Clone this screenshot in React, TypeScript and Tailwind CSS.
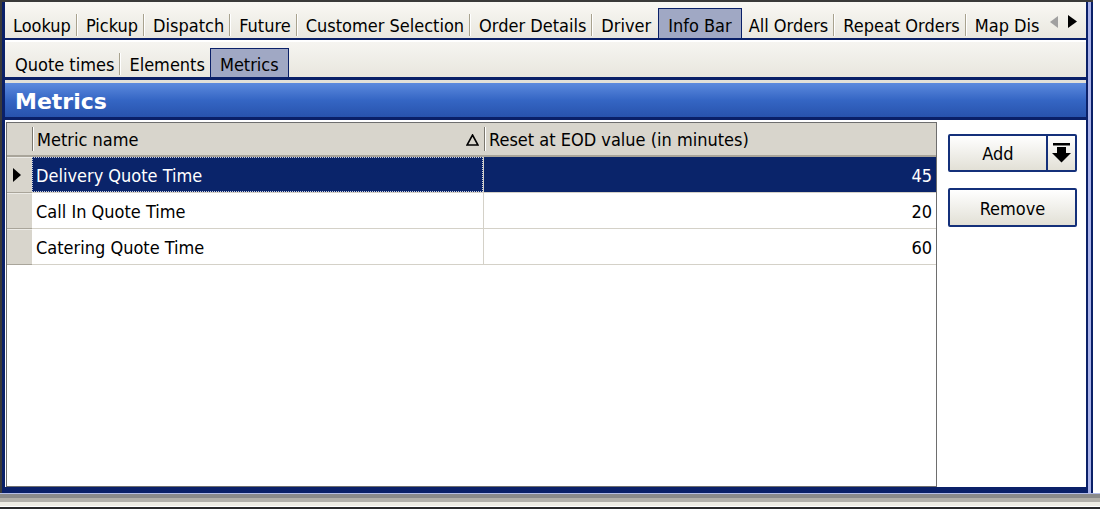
import React from "react";

const topTabs = [
  "Lookup",
  "Pickup",
  "Dispatch",
  "Future",
  "Customer Selection",
  "Order Details",
  "Driver",
  "Info Bar",
  "All Orders",
  "Repeat Orders",
  "Map Dis",
];

const subTabs = ["Quote times", "Elements", "Metrics"];

const rows = [
  { name: "Delivery Quote Time", value: 45 },
  { name: "Call In Quote Time", value: 20 },
  { name: "Catering Quote Time", value: 60 },
];

const Separator = () => (
  <span className="mb-[2px] flex h-[22px] w-[2px] shrink-0">
    <span className="w-px bg-[#a8a28e]" />
    <span className="w-px bg-white" />
  </span>
);

const TabStrip = ({
  tabs,
  active,
  activeTop,
  firstPad,
}: {
  tabs: string[];
  active: string;
  activeTop: string;
  firstPad: string;
}) => {
  const activeIndex = tabs.indexOf(active);
  return (
    <div className="flex min-w-0 flex-1 items-end overflow-hidden whitespace-nowrap">
      {tabs.map((tab, i) => {
        if (tab === active) {
          return (
            <div
              key={tab}
              className={`flex shrink-0 items-center border border-b-0 border-[#0a2068] bg-[#a0a8c4] px-[9px] pt-[3px] ${activeTop}`}
            >
              {tab}
            </div>
          );
        }
        const showSep = i !== activeIndex - 1 && i !== tabs.length - 1;
        const pad = i === 0 ? firstPad : i === activeIndex + 1 ? "pl-[7px]" : "pl-[8px]";
        return (
          <React.Fragment key={tab}>
            <span className={`shrink-0 pb-px leading-[22px] ${pad} pr-[5px]`}>
              {tab}
            </span>
            {showSep && <Separator />}
          </React.Fragment>
        );
      })}
    </div>
  );
};

const DropArrow = () => (
  <svg width="19" height="20" viewBox="0 0 19 20">
    <rect x="1" y="0" width="17" height="2.5" fill="#000" />
    <rect x="5" y="4" width="9" height="7" fill="#000" />
    <polygon points="0,10 19,10 9.5,19.5" fill="#000" />
  </svg>
);

const SortTriangle = () => (
  <svg width="13" height="12" viewBox="0 0 13 12">
    <polygon
      points="6.5,1 12,11 1,11"
      fill="none"
      stroke="#000"
      strokeWidth="1.6"
    />
  </svg>
);

export default function App() {
  return (
    <div className="flex h-[509px] w-[1100px] flex-col overflow-hidden bg-white font-['DejaVu_Sans_Condensed','Liberation_Sans',sans-serif] text-[18px] text-black">
      <div className="flex h-[493px] w-[1093px] shrink-0 border-l-2 border-t-2 border-[#3a3a3a]">
        <div className="flex min-w-0 flex-1 flex-col border-l-[3px] border-[#0a2068]">
          {/* top tabs */}
          <div className="flex h-[38px] shrink-0 border-b-2 border-[#0a2068] bg-gradient-to-b from-[#f9f8f4] to-[#e9e7df]">
            <TabStrip tabs={topTabs} active="Info Bar" activeTop="ml-[2px] h-[30px]" firstPad="pl-[8px]" />
            <div className="flex w-[38px] shrink-0 items-center gap-[10px] pl-[2px] pt-[3px]">
              <svg width="8" height="12" viewBox="0 0 8 12">
                <polygon points="8,0 8,12 0,6" fill="#a0a0a0" />
              </svg>
              <svg width="9" height="13" viewBox="0 0 9 13">
                <polygon points="0,0 0,13 9,6.5" fill="#000" />
              </svg>
            </div>
          </div>

          {/* sub tabs */}
          <div className="flex h-[40px] shrink-0 border-b-[3px] border-t-2 border-b-[#0a2068] border-t-white bg-gradient-to-b from-[#f6f5f1] to-[#e8e6de]">
            <TabStrip tabs={subTabs} active="Metrics" activeTop="h-[29px]" firstPad="pl-[10px]" />
          </div>
          <div className="h-[3px] shrink-0 bg-[#e2e0d8]" />

          {/* header */}
          <div className="flex h-[34px] shrink-0 items-center bg-gradient-to-b from-[#5c8ade] via-[#3566c4] to-[#2853ad] pl-[10px] pt-[3px] font-['DejaVu_Sans',sans-serif] text-[22px] font-bold text-white">
            Metrics
          </div>
          <div className="h-[3px] shrink-0 bg-[#0a2068]" />

          {/* content */}
          <div className="flex min-h-0 flex-1 bg-white pt-[2px]">
            <div className="ml-px flex w-[931px] shrink-0 flex-col border border-[#6e6e6e] bg-white">
              <div className="flex h-[34px] shrink-0 border-b-2 border-[#a9a59a] bg-[#d8d5cc]">
                <div className="w-[25px] shrink-0" />
                <div className="flex w-[452px] shrink-0 items-center">
                  <span className="flex h-[24px] w-[2px] shrink-0">
                    <span className="w-px bg-[#7a776e]" />
                    <span className="w-px bg-white" />
                  </span>
                  <span className="flex-1 pl-[3px] pt-px">Metric name</span>
                  <span className="pr-[5px] pt-[1px]">
                    <SortTriangle />
                  </span>
                </div>
                <div className="flex flex-1 items-center">
                  <span className="flex h-[24px] w-[2px] shrink-0">
                    <span className="w-px bg-[#7a776e]" />
                    <span className="w-px bg-white" />
                  </span>
                  <span className="pl-[3px] pt-px">Reset at EOD value (in minutes)</span>
                </div>
              </div>
              {rows.map((row, i) => {
                const selected = i === 0;
                return (
                  <div key={row.name} className="flex h-[36px] shrink-0">
                    <div className="flex w-[25px] shrink-0 items-center border-b border-t border-b-[#a9a59a] border-t-[#ecebe6] bg-[#d8d5cc] pl-[6px]">
                      {selected && (
                        <svg width="8" height="14" viewBox="0 0 8 14">
                          <polygon points="0,0 0,14 8,7" fill="#000" />
                        </svg>
                      )}
                    </div>
                    <div
                      className={`flex w-[452px] shrink-0 items-center border-b border-r border-[#d4d1c8] ${
                        selected ? "bg-[#0a246a] text-white" : ""
                      }`}
                    >
                      <div
                        className={`flex h-full w-full items-center pl-[3px] pt-[2px] ${
                          selected ? "border border-dotted border-[#c8cde0]" : "border border-transparent"
                        }`}
                      >
                        {row.name}
                      </div>
                    </div>
                    <div
                      className={`flex flex-1 items-center justify-end border-b border-[#d4d1c8] pr-[4px] pt-[2px] ${
                        selected ? "bg-[#0a246a] text-white" : ""
                      }`}
                    >
                      {row.value}
                    </div>
                  </div>
                );
              })}
            </div>

            {/* buttons */}
            <div className="flex flex-1 flex-col gap-[16px] pl-[11px] pt-[12px]">
              <div className="flex h-[38px] w-[129px] rounded-[2px] border-2 border-[#14307a] bg-gradient-to-b from-[#ffffff] to-[#e2e0d6]">
                <div className="flex flex-1 items-center justify-center pt-px">Add</div>
                <div className="w-[2px] bg-[#14307a]" />
                <div className="flex w-[27px] items-center justify-center">
                  <DropArrow />
                </div>
              </div>
              <div className="flex h-[39px] w-[129px] items-center justify-center rounded-[2px] border-2 border-[#14307a] bg-gradient-to-b from-[#ffffff] to-[#e2e0d6] pt-px">
                Remove
              </div>
            </div>
          </div>
          <div className="h-[6px] shrink-0 bg-[#0a2068]" />
        </div>
        <div className="flex w-[7px] shrink-0">
          <div className="w-[2px] bg-[#0a2068]" />
          <div className="w-[3px] bg-[#aab3ea]" />
          <div className="w-[2px] bg-[#0a2068]" />
        </div>
      </div>
      <div className="h-px bg-[#b4bde8]" />
      <div className="h-[4px] bg-[#8a8a8a]" />
      <div className="h-[4px] bg-[#b2b0aa]" />
      <div className="h-[4px] bg-[#efede4]" />
      <div className="h-px bg-white" />
      <div className="flex-1 bg-[#2a2a2a]" />
    </div>
  );
}
